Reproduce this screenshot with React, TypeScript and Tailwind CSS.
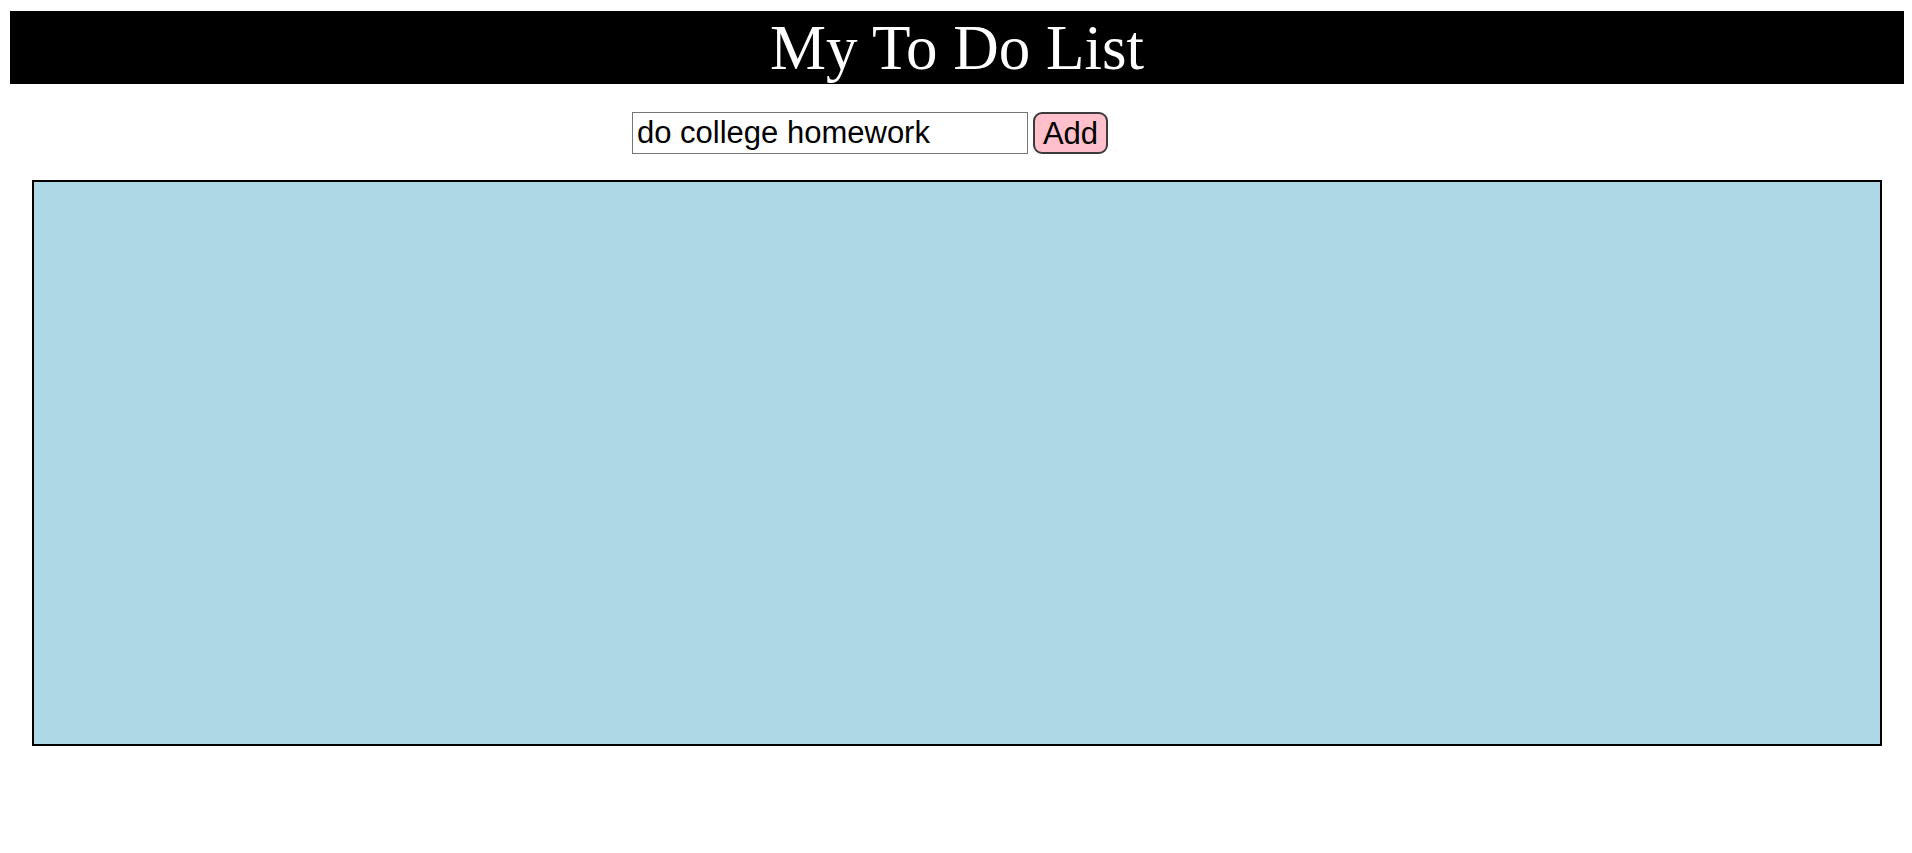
import { useState } from 'react'

export default function App() {
  const [task, setTask] = useState('do college homework')

  return (
    <div className="min-h-[853px] bg-white pt-[11px]">
      <h1
        className="ml-[10px] mr-[8px] h-[73px] bg-black text-white text-center text-[63px] leading-[75px]"
        style={{ fontFamily: '"Liberation Serif", "Times New Roman", serif' }}
      >
        My To Do List
      </h1>

      <div className="mt-[28px] ml-[632px] flex items-center gap-[5px]" style={{ fontFamily: '"Liberation Sans", Arial, sans-serif' }}>
        <input
          value={task}
          onChange={(e) => setTask(e.target.value)}
          className="w-[396px] h-[42px] border border-[#767676] px-[4px] text-[31px] text-black outline-none"
        />
        <button className="w-[75px] h-[42px] rounded-[9px] border-2 border-[#3b3b3b] bg-[#ffc0cb] text-[31px] leading-none text-black">
          Add
        </button>
      </div>

      <div className="mt-[26px] ml-[32px] w-[1850px] h-[566px] border-2 border-black bg-[#add8e6]"></div>
    </div>
  )
}
